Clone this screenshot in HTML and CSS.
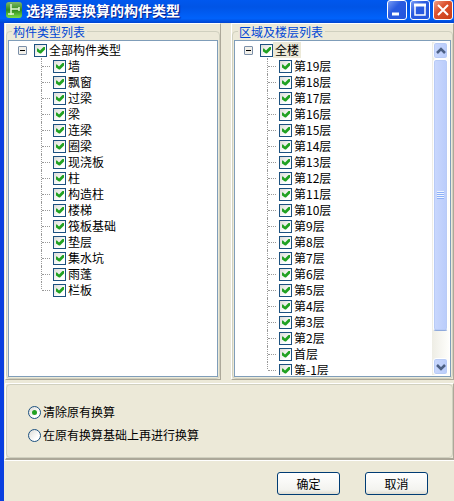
FILE: index.html
```
<!DOCTYPE html>
<html lang="zh-CN">
<head>
    <meta charset="UTF-8">
    <meta name="viewport" content="width=device-width, initial-scale=1.0">
    <title>选择需要换算的构件类型</title>
    <link rel="stylesheet" href="styles.css">
</head>
<body>
    <form class="window" onsubmit="return false">
        <header class="titlebar">
            <svg class="app-icon" viewBox="0 0 16 16" aria-hidden="true">
                <defs>
                    <linearGradient id="leaf" x1="0" y1="0" x2="0" y2="1">
                        <stop offset="0" stop-color="#7fb86a"/>
                        <stop offset="0.5" stop-color="#2f8a1c"/>
                        <stop offset="1" stop-color="#7be04a"/>
                    </linearGradient>
                </defs>
                <rect width="16" height="16" rx="3" fill="url(#leaf)"/>
                <path d="M5 2v11M2 12h6M5 7h8M13 5v4" fill="none" stroke="#e0f5d4" stroke-width="1.5"/>
            </svg>
            <h1 class="title">选择需要换算的构件类型</h1>
            <div class="controls">
                <button type="button" class="control" aria-label="最小化">
                    <svg viewBox="0 0 18 18"><path d="M4 13h7" stroke-width="3"/></svg>
                </button>
                <button type="button" class="control" aria-label="最大化">
                    <svg viewBox="0 0 18 18"><path d="M4 4h10v10H4z"/><path d="M3 4h12" stroke-width="3"/></svg>
                </button>
                <button type="button" class="control close" aria-label="关闭">
                    <svg viewBox="0 0 18 18"><path d="M4 4l10 10M14 4L4 14" stroke-width="2"/></svg>
                </button>
            </div>
        </header>

        <main class="panels">
            <section class="panel">
                <div class="group">
                    <h2 class="group-title">构件类型列表</h2>
                    <div class="list">
                        <div class="tree" data-root="全部构件类型" data-items="墙,飘窗,过梁,梁,连梁,圈梁,现浇板,柱,构造柱,楼梯,筏板基础,垫层,集水坑,雨蓬,栏板"></div>
                    </div>
                </div>
            </section>
            <section class="panel">
                <div class="group">
                    <h2 class="group-title">区域及楼层列表</h2>
                    <div class="list">
                        <div class="tree selected" data-root="全楼" data-items="第19层,第18层,第17层,第16层,第15层,第14层,第13层,第12层,第11层,第10层,第9层,第8层,第7层,第6层,第5层,第4层,第3层,第2层,首层,第-1层"></div>
                        <div class="scrollbar">
                            <button type="button" class="arrow" aria-label="向上滚动">
                                <svg viewBox="0 0 13 13"><path d="M3 9l4-4 4 4"/></svg>
                            </button>
                            <div class="track">
                                <div class="thumb"><span class="grip"></span></div>
                            </div>
                            <button type="button" class="arrow" aria-label="向下滚动">
                                <svg viewBox="0 0 13 13"><path d="M3 5l4 4 4-4"/></svg>
                            </button>
                        </div>
                    </div>
                </div>
            </section>
        </main>

        <section class="options">
            <div class="options-box">
                <label class="option"><input type="radio" name="mode" checked>清除原有换算</label>
                <label class="option"><input type="radio" name="mode">在原有换算基础上再进行换算</label>
            </div>
        </section>

        <footer class="actions">
            <button type="submit" class="btn">确定</button>
            <button type="button" class="btn">取消</button>
        </footer>
    </form>

    <script>
        // Build each tree from its data attributes
        document.querySelectorAll('.tree').forEach(tree => {
            const items = tree.dataset.items.split(',');
            const node = text =>
                `<label class="node"><input type="checkbox" checked><span>${text}</span></label>`;

            tree.innerHTML = `
                <div class="root">
                    <button type="button" class="expander" aria-label="折叠"></button>
                    ${node(tree.dataset.root)}
                </div>
                <ul class="children">
                    ${items.map(item => `<li>${node(item)}</li>`).join('')}
                </ul>`;

            tree.querySelector('.expander').addEventListener('click', () => {
                const children = tree.querySelector('.children');
                children.hidden = !children.hidden;
            });
        });
    </script>
</body>
</html>
```
FILE: styles.css
```
* {
    margin: 0;
    padding: 0;
    box-sizing: border-box;
}

body {
    font-family: 'Noto Sans CJK SC', sans-serif;
    font-size: 12px;
    line-height: 16px;
    color: #000;
}

button,
input {
    font: inherit;
    appearance: none;
}

.window {
    display: flex;
    flex-direction: column;
    height: 100vh;
    min-height: 300px;
    background: #ece9d8;
    border-left: 4px solid #0a3fe0;
}

/* Title bar */
.titlebar {
    display: flex;
    align-items: center;
    height: 23px;
    flex: none;
    margin-left: -4px;
    padding: 0 1px 3px 6px;
    background: linear-gradient(#0058ee, #0054e6 30%, #0062fb 80%, #0044d0);
}

.app-icon {
    width: 16px;
    height: 16px;
    margin-right: 4px;
}

.title {
    flex: 1;
    font-size: 14px;
    line-height: 20px;
    font-weight: bold;
    color: #fff;
    text-shadow: 1px 1px 1px #0a1883;
    white-space: nowrap;
}

.controls {
    display: flex;
    gap: 3px;
}

.control {
    width: 20px;
    height: 20px;
    border: 1px solid #fff;
    border-radius: 3px;
    background: linear-gradient(135deg, #7a9cf5, #2a5be0 40%, #2456dd);
}

.control.close {
    background: linear-gradient(135deg, #f0a088, #dc5230 40%, #c83c14);
}

.control svg {
    display: block;
    width: 18px;
    height: 18px;
    fill: none;
    stroke: #fff;
    stroke-width: 1.5;
}

/* Panels with the two lists */
.panels {
    flex: 1;
    min-height: 0;
    display: grid;
    grid-template-columns: 216fr 223fr;
    grid-template-rows: 100%;
    gap: 10px;
    padding-left: 1px;
}

.panel {
    display: flex;
    min-width: 0;
    padding-top: 7px;
    border: 1px solid #fff;
    border-right-color: #aca899;
    border-bottom-color: #aca899;
}

.group {
    flex: 1;
    min-width: 0;
    display: flex;
    flex-direction: column;
    padding: 0 1px 1px;
    border: 1px solid #d0d0bf;
    border-radius: 4px;
}

.group-title {
    align-self: flex-start;
    margin: -8px 0 0 4px;
    padding: 0 2px 0 1px;
    font-size: 12px;
    line-height: 16px;
    font-weight: normal;
    color: #0046d5;
    background: #ece9d8;
}

.list {
    flex: 1;
    min-height: 0;
    display: flex;
    padding: 1px;
    background: #fff;
    border: 1px solid #7f9db9;
    overflow: hidden;
}

/* Tree */
.tree {
    flex: 1;
    padding-left: 8px;
    overflow: hidden;
}

.root,
.node {
    display: flex;
    align-items: center;
    height: 16px;
}

.expander {
    width: 9px;
    height: 9px;
    margin-right: 7px;
    border: 1px solid #7b8fa8;
    border-radius: 1px;
    background: linear-gradient(#000, #000) center / 5px 1px no-repeat, #f2f0ea;
}

.node span {
    padding: 0 2px;
    white-space: nowrap;
}

.selected .root .node span {
    background: #ece9d8;
}

.node input {
    flex: none;
    width: 13px;
    height: 13px;
    border: 1px solid #1c5180;
    background: linear-gradient(135deg, #dcdcd7, #fff 70%);
}

.node input:checked::before {
    content: '';
    display: block;
    width: 8px;
    height: 7px;
    margin: 2px;
    background: #21a121;
    clip-path: polygon(0 2px, 1px 2px, 3px 4px, 7px 0, 8px 0, 8px 3px, 4px 7px, 3px 7px, 0 5px);
}

.children {
    list-style: none;
    margin-left: 23px;
}

.children li {
    display: flex;
    border-left: 1px dotted #999;
}

.children li:last-child {
    border-left-color: transparent;
    background: repeating-linear-gradient(#999 0 1px, transparent 1px 2px) left top / 1px 8px no-repeat;
    background-origin: border-box;
}

.children li::before {
    content: '';
    width: 8px;
    height: 8px;
    margin-right: 3px;
    border-bottom: 1px dotted #999;
}

/* Scrollbar */
.scrollbar {
    width: 17px;
    flex: none;
    display: flex;
    flex-direction: column;
    padding: 0 1px;
    background: linear-gradient(90deg, #eeede5, #fefefb);
}

.arrow,
.thumb {
    border: 1px solid #fff;
    border-radius: 3px;
    background: linear-gradient(90deg, #cad8fd, #b9ccfb);
    box-shadow: inset 0 0 0 1px #b8cbf6;
}

.arrow {
    width: 15px;
    height: 17px;
    flex: none;
}

.arrow svg {
    display: block;
    width: 13px;
    height: 13px;
    fill: none;
    stroke: #4d6185;
    stroke-width: 2.5;
}

.track {
    flex: 1;
}

.thumb {
    display: flex;
    align-items: center;
    justify-content: center;
    height: 91%;
    border-bottom-color: #8faadc;
}

.grip {
    width: 7px;
    height: 8px;
    background: repeating-linear-gradient(#eef4fe 0 1px, #8cb0f8 1px 2px);
}

/* Conversion mode */
.options {
    flex: none;
    margin: 3px 0 0 1px;
    border: solid;
    border-width: 1px 1px 2px;
    border-color: #fff #aca899 #aca899 #fff;
}

.options-box {
    display: flex;
    flex-direction: column;
    gap: 7px;
    padding: 19px 21px 14px;
    border: 1px solid #d0d0bf;
    border-radius: 4px;
}

.option {
    display: flex;
    align-items: center;
    gap: 2px;
}

.option input {
    width: 13px;
    height: 13px;
    border: 1px solid #1c5180;
    border-radius: 50%;
    background: linear-gradient(135deg, #dcdcd7, #fff 70%);
}

.option input:checked::before {
    content: '';
    display: block;
    width: 5px;
    height: 5px;
    margin: 3px;
    border-radius: 50%;
    background: #21a121;
}

/* Bottom buttons */
.actions {
    flex: none;
    display: flex;
    justify-content: flex-end;
    gap: 25px;
    padding: 11px 26px 6px;
    border-top: 1px solid #fff;
}

.btn {
    width: 63px;
    height: 23px;
    border: 1px solid #003c74;
    border-radius: 3px;
    background: linear-gradient(#fff, #f3f3ef 80%, #dfdcd0);
}
```
